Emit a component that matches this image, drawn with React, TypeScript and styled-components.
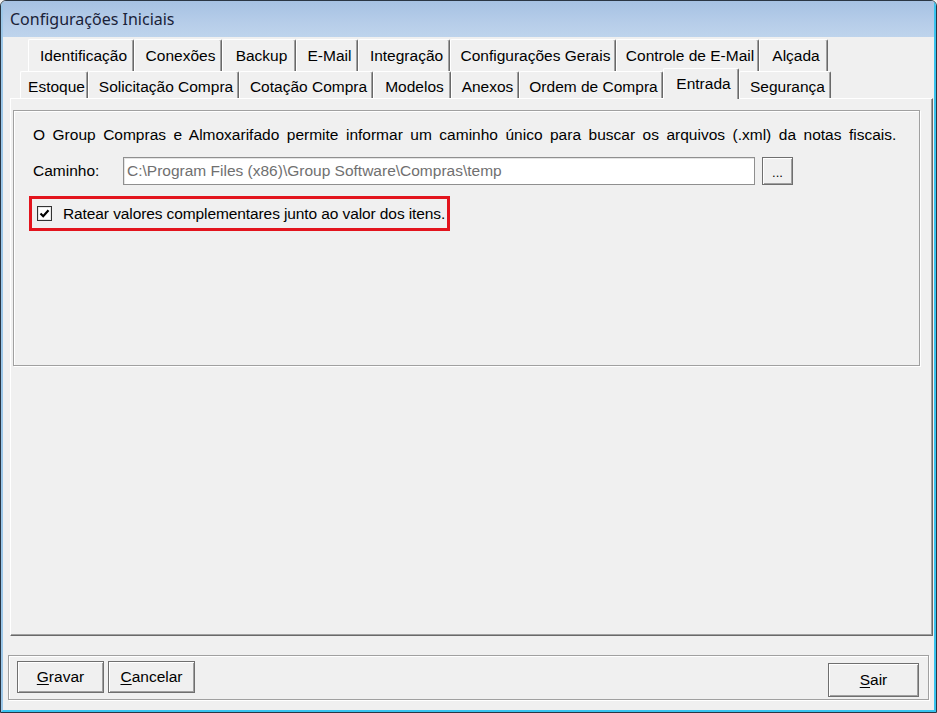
import React from "react";
import styled, { createGlobalStyle } from "styled-components";

const GlobalStyle = createGlobalStyle`
  html, body {
    margin: 0;
    padding: 0;
    background: #f0f0f0;
  }
  body {
    font-family: "Liberation Sans", Arial, sans-serif;
    font-size: 15.5px;
    color: #000;
  }
  * {
    box-sizing: border-box;
  }
`;

const Frame = styled.div`
  width: 937px;
  height: 713px;
  border: 1px solid #2a3644;
  border-radius: 6px 6px 0 0;
  overflow: hidden;
  background: #f0f0f0;
`;

const Inner = styled.div`
  height: 100%;
  display: flex;
  flex-direction: column;
  border-left: 2px solid #9cc7e8;
  border-right: 2px solid #38c3ee;
  border-bottom: 2px solid #38c3ee;
`;

const TitleBar = styled.div`
  height: 36px;
  flex-shrink: 0;
  display: flex;
  align-items: center;
  padding-left: 7px;
  background: linear-gradient(180deg, #a6c2e3 0%, #b6cde9 60%, #bed4ec 100%);
  font-family: "Noto Sans", "Open Sans", sans-serif;
  font-size: 16px;
  color: #1a2238;
`;

const Body = styled.div`
  flex: 1;
  display: flex;
  flex-direction: column;
  padding-top: 2px;
`;

const PageControl = styled.div`
  margin-left: 7px;
  width: 923px;
  display: flex;
  flex-direction: column;
`;

const TabRow = styled.div<{ $indent: number; $h: number }>`
  display: flex;
  height: ${p => p.$h}px;
  padding-left: ${p => p.$indent}px;
  align-items: flex-end;
  position: relative;
`;

const Tab = styled.div<{ $w: number; $active?: boolean; $dy: number }>`
  width: ${p => p.$w}px;
  height: ${p => (p.$active ? "calc(100% + 4px)" : "100%")};
  margin-bottom: ${p => (p.$active ? "-1px" : "0")};
  display: flex;
  align-items: center;
  justify-content: center;
  padding: ${p => p.$dy}px 2px 0 7px;
  border-top: 1px solid #ffffff;
  border-left: 1px solid #ffffff;
  border-right: 1px solid #696969;
  box-shadow: inset -1px 0 0 #a0a0a0;
  border-radius: 2px 2px 0 0;
  background: #f0f0f0;
  white-space: nowrap;
  position: relative;
  z-index: ${p => (p.$active ? 2 : 0)};
`;

const Panel = styled.div`
  height: 538px;
  border-top: 1px solid #ffffff;
  border-left: 1px solid #ffffff;
  border-right: 1px solid #696969;
  border-bottom: 1px solid #696969;
  box-shadow: inset -1px -1px 0 #a0a0a0;
  padding: 11px 12px 0 2px;
  position: relative;
  z-index: 1;
`;

const GroupBox = styled.div`
  height: 256px;
  border: 1px solid #a0a0a0;
  box-shadow: 1px 1px 0 #ffffff, inset 1px 1px 0 #ffffff;
  padding: 14px 19px 0 19px;
  display: flex;
  flex-direction: column;
  align-items: flex-start;
`;

const Note = styled.div`
  line-height: 19px;
  white-space: nowrap;
  word-spacing: 3.2px;
`;

const PathRow = styled.div`
  display: flex;
  align-items: center;
  margin-top: 13px;
  height: 28px;
`;

const FieldLabel = styled.label`
  width: 90px;
`;

const PathInput = styled.div`
  width: 632px;
  height: 28px;
  display: flex;
  align-items: center;
  padding-left: 3px;
  background: #ffffff;
  border: 1px solid #8f8f8f;
  box-shadow: inset 1px 1px 0 #e4e4e4;
  color: #707070;
  white-space: nowrap;
  overflow: hidden;
`;

const Button = styled.button<{ $w: number; $h: number }>`
  width: ${p => p.$w}px;
  height: ${p => p.$h}px;
  padding: 0;
  font-family: inherit;
  font-size: inherit;
  color: #000;
  background: #f0f0f0;
  border: 1px solid #6f6f6f;
  box-shadow: inset 1px 1px 0 #ffffff, inset -1px -1px 0 #a0a0a0;
  border-radius: 0;
  display: flex;
  align-items: center;
  justify-content: center;

  u {
    text-decoration-thickness: 1px;
    text-underline-offset: 2px;
  }
`;

const BrowseButton = styled(Button)`
  margin-left: 7px;
  font-size: 13px;
  padding-top: 3px;
`;

const Highlight = styled.div`
  margin-top: 11px;
  margin-left: -4px;
  width: 421px;
  height: 35px;
  border: 3px solid #e3141d;
  display: flex;
  align-items: center;
  padding-left: 5px;
`;

const CheckBox = styled.span`
  width: 15px;
  height: 15px;
  border: 1px solid #333333;
  background: #ffffff;
  box-shadow: inset 0 0 0 1px #e6e6e6;
  display: flex;
  align-items: center;
  justify-content: center;
  margin-right: 11px;
`;

const CheckLabel = styled.span`
  white-space: nowrap;
  letter-spacing: -0.1px;
`;

const ButtonBar = styled.div`
  margin: 19px 5px 0 5px;
  height: 45px;
  border: 1px solid #a0a0a0;
  box-shadow: 1px 1px 0 #ffffff, inset 1px 1px 0 #ffffff;
  display: flex;
  align-items: flex-start;
  padding: 5px 9px 0 8px;
  gap: 4px;
`;

const Spacer = styled.div`
  flex: 1;
`;

const ExitButton = styled(Button)`
  margin-top: 2px;
`;

const topTabs = [
  { label: "Identificação", w: 106 },
  { label: "Conexões", w: 88 },
  { label: "Backup", w: 74 },
  { label: "E-Mail", w: 62 },
  { label: "Integração", w: 92 },
  { label: "Configurações Gerais", w: 166 },
  { label: "Controle de E-Mail", w: 143 },
  { label: "Alçada", w: 69 }
];

const bottomTabs = [
  { label: "Estoque", w: 68 },
  { label: "Solicitação Compra", w: 151 },
  { label: "Cotação Compra", w: 134 },
  { label: "Modelos", w: 78 },
  { label: "Anexos", w: 68 },
  { label: "Ordem de Compra", w: 144 },
  { label: "Entrada", w: 76, active: true },
  { label: "Segurança", w: 92 }
];

function App() {
  return (
    <>
      <GlobalStyle />
      <Frame>
        <Inner>
          <TitleBar>Configurações Iniciais</TitleBar>
          <Body>
            <PageControl>
              <TabRow $indent={18} $h={32}>
                {topTabs.map(t => (
                  <Tab key={t.label} $w={t.w} $dy={0}>{t.label}</Tab>
                ))}
              </TabRow>
              <TabRow $indent={10} $h={27}>
                {bottomTabs.map(t => (
                  <Tab key={t.label} $w={t.w} $active={t.active} $dy={t.active ? 0 : 3}>
                    {t.label}
                  </Tab>
                ))}
              </TabRow>
              <Panel>
                <GroupBox>
                  <Note>
                    O Group Compras e Almoxarifado permite informar um caminho único para buscar os arquivos (.xml) da notas fiscais.
                  </Note>
                  <PathRow>
                    <FieldLabel>Caminho:</FieldLabel>
                    <PathInput>C:\Program Files (x86)\Group Software\Compras\temp</PathInput>
                    <BrowseButton $w={31} $h={28}>...</BrowseButton>
                  </PathRow>
                  <Highlight>
                    <CheckBox>
                      <svg width="11" height="11" viewBox="0 0 11 11">
                        <path d="M1.5 5.5 L4.2 8.2 L9.5 2.2" fill="none" stroke="#000" strokeWidth="2.2" />
                      </svg>
                    </CheckBox>
                    <CheckLabel>Ratear valores complementares junto ao valor dos itens.</CheckLabel>
                  </Highlight>
                </GroupBox>
              </Panel>
            </PageControl>
            <ButtonBar>
              <Button $w={87} $h={32}><span><u>G</u>ravar</span></Button>
              <Button $w={87} $h={32}><span><u>C</u>ancelar</span></Button>
              <Spacer />
              <ExitButton $w={91} $h={34}><span><u>S</u>air</span></ExitButton>
            </ButtonBar>
          </Body>
        </Inner>
      </Frame>
    </>
  );
}

export default App;
